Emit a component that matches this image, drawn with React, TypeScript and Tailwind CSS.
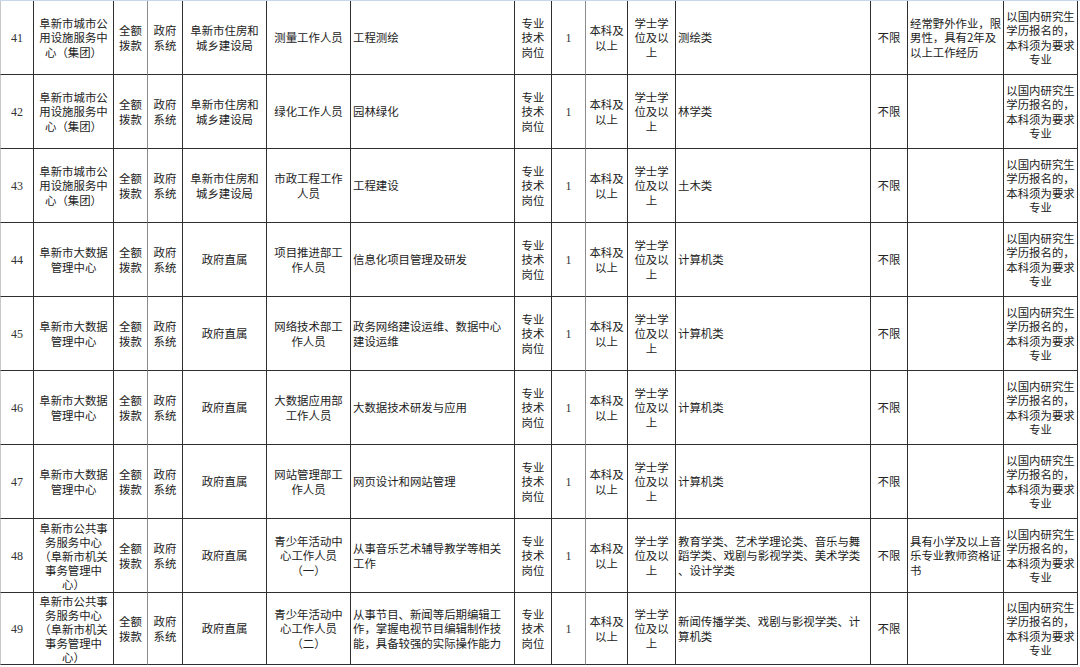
import React from 'react'

type Align = 'c' | 'l'

interface Cell {
    lines: string[]
    align?: Align
    num?: boolean
}

// column widths include the 1px right border
const cols = 'grid-cols-[34px_80px_34px_35px_84px_84px_164px_37px_34px_42px_48px_195px_37px_96px_74px]'

const grayCols = new Set([2, 8])

const unitCity = ['阜新市城市公', '用设施服务中', '心（集团）']
const unitData = ['阜新市大数据', '管理中心']
const unitPublic = ['阜新市公共事', '务服务中心', '（阜新市机关', '事务管理中', '心）']
const housing = ['阜新市住房和', '城乡建设局']
const direct = ['政府直属']
const note = ['以国内研究生', '学历报名的，', '本科须为要求', '专业']

function row(
    no: string,
    unit: string[],
    dept: string[],
    post: string[],
    work: string[],
    major: string[],
    other: string[] = [],
): Cell[] {
    return [
        { lines: [no], num: true },
        { lines: unit },
        { lines: ['全额', '拨款'] },
        { lines: ['政府', '系统'] },
        { lines: dept },
        { lines: post },
        { lines: work, align: 'l' },
        { lines: ['专业', '技术', '岗位'] },
        { lines: ['1'], num: true },
        { lines: ['本科及', '以上'] },
        { lines: ['学士学', '位及以', '上'] },
        { lines: major, align: 'l' },
        { lines: ['不限'] },
        { lines: other, align: 'l' },
        { lines: note },
    ]
}

const rows: Cell[][] = [
    row('41', unitCity, housing, ['测量工作人员'], ['工程测绘'], ['测绘类'], ['经常野外作业，限', '男性，具有2年及', '以上工作经历']),
    row('42', unitCity, housing, ['绿化工作人员'], ['园林绿化'], ['林学类']),
    row('43', unitCity, housing, ['市政工程工作', '人员'], ['工程建设'], ['土木类']),
    row('44', unitData, direct, ['项目推进部工', '作人员'], ['信息化项目管理及研发'], ['计算机类']),
    row('45', unitData, direct, ['网络技术部工', '作人员'], ['政务网络建设运维、数据中心', '建设运维'], ['计算机类']),
    row('46', unitData, direct, ['大数据应用部', '工作人员'], ['大数据技术研发与应用'], ['计算机类']),
    row('47', unitData, direct, ['网站管理部工', '作人员'], ['网页设计和网站管理'], ['计算机类']),
    row(
        '48',
        unitPublic,
        direct,
        ['青少年活动中', '心工作人员', '（一）'],
        ['从事音乐艺术辅导教学等相关', '工作'],
        ['教育学类、艺术学理论类、音乐与舞', '蹈学类、戏剧与影视学类、美术学类', '、设计学类'],
        ['具有小学及以上音', '乐专业教师资格证', '书'],
    ),
    row(
        '49',
        unitPublic,
        direct,
        ['青少年活动中', '心工作人员', '（二）'],
        ['从事节目、新闻等后期编辑工', '作，掌握电视节目编辑制作技', '能，具备较强的实际操作能力'],
        ['新闻传播学类、戏剧与影视学类、计', '算机类'],
    ),
]

export default function App() {
    return (
        <div
            className="w-[1080px] h-[667px] bg-white overflow-hidden border-t border-[#c9d8e8]"
            style={{ fontFamily: '"Noto Sans CJK SC", "Noto Sans", sans-serif' }}
        >
            <div className={`grid ${cols} grid-rows-[74px_74px_74px_74px_74px_74px_74px_74px_72px] w-[1078px]`}>
                {rows.map((cells, r) =>
                    cells.map((cell, c) => (
                        <div
                            key={`${r}-${c}`}
                            className={[
                                'flex flex-col justify-center border-b border-r border-b-[#2e2e2e] overflow-hidden',
                                grayCols.has(c) ? 'border-r-[#8c8c8c]' : 'border-r-[#2e2e2e]',
                                cell.align === 'l' ? 'items-start text-left pl-[2px]' : 'items-center text-center',
                                c === 0 ? 'border-l border-l-[#c8c8c8]' : '',
                            ].join(' ')}
                        >
                            {cell.lines.map((line, i) => (
                                <span
                                    key={i}
                                    className={
                                        cell.num
                                            ? 'block whitespace-nowrap text-[12px] leading-[14px] text-[#333]'
                                            : cell.lines.length > 4
                                              ? 'block whitespace-nowrap text-[11.4px] leading-[14px] text-[#222]'
                                              : 'block whitespace-nowrap text-[11.4px] leading-[14.4px] text-[#222]'
                                    }
                                    style={cell.num ? { fontFamily: '"Liberation Serif", serif' } : undefined}
                                >
                                    {line}
                                </span>
                            ))}
                        </div>
                    )),
                )}
            </div>
        </div>
    )
}
